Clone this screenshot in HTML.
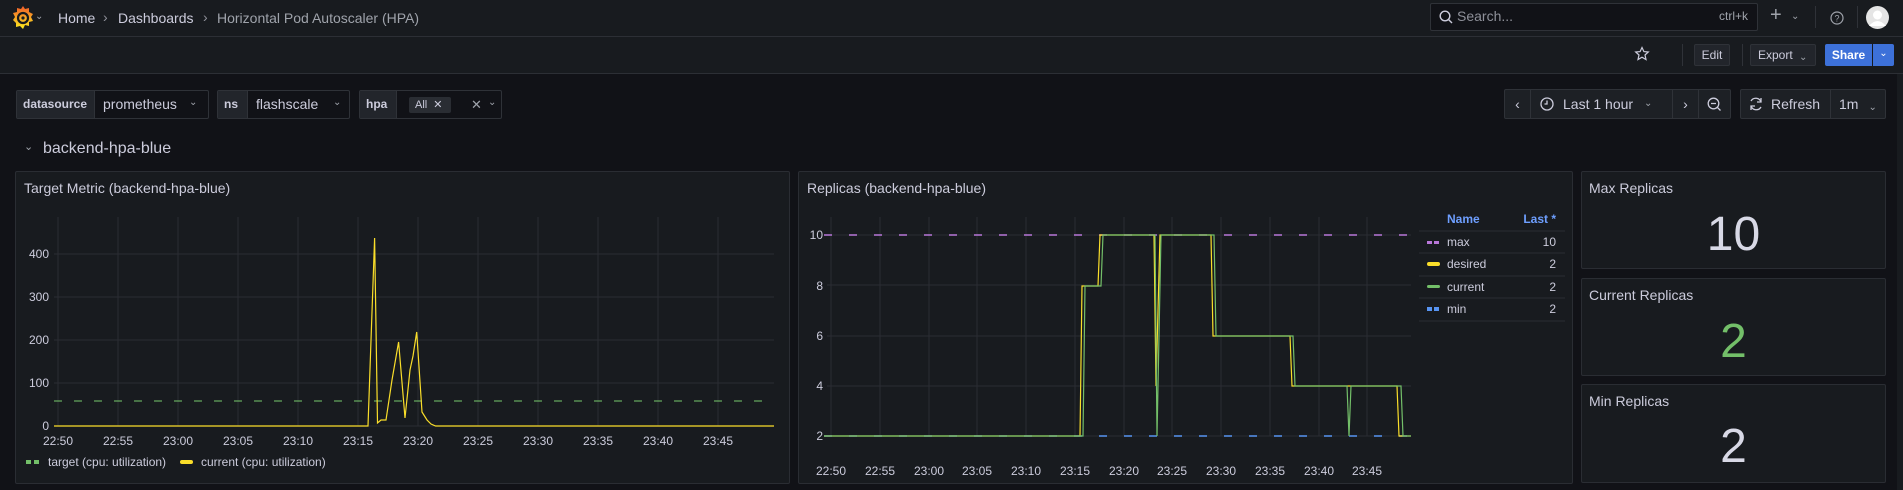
<!DOCTYPE html>
<html><head><meta charset="utf-8">
<style>
*{box-sizing:border-box;margin:0;padding:0}
body{width:1903px;height:490px;background:#111217;font-family:"Liberation Sans",sans-serif;color:#ccccdc;position:relative;overflow:hidden}
.a{position:absolute}
.bar1{left:0;top:0;width:1903px;height:37px;background:#181b1f;border-bottom:1px solid #2c2f35}
.bar2{left:0;top:37px;width:1903px;height:37px;background:#181b1f;border-bottom:1px solid #2c2f35}
.box{position:absolute;border:1px solid #2f3238;border-radius:2px;background:#111217;height:29px;top:90px}
.lbl{position:absolute;top:0;height:27px;background:#22252b;border-right:1px solid #2f3238;font-size:12px;font-weight:bold;line-height:27px;padding-left:6px;color:#ccccdc}
.val{position:absolute;top:0;line-height:27px;font-size:14px;color:#ccccdc}
.btn{position:absolute;top:89px;height:30px;background:#1d2025;border:1px solid #2f3238;font-size:14px;line-height:28px;color:#ccccdc}
.panel{position:absolute;background:#181b1f;border:1px solid #2a2d33;border-radius:2px}
.pt{position:absolute;font-size:14px;color:#ccccdc;font-weight:500}
.chev{font-size:10px;color:#9fa3ab}
span.chev{position:relative;top:1px}
</style></head><body>
<div class="a bar1"></div>
<div class="a bar2"></div>
<svg class="a" style="left:12px;top:5px" width="22" height="26" viewBox="0 0 22 26">
<defs><linearGradient id="g" x1="0" y1="1" x2="0" y2="0"><stop offset="0" stop-color="#fcee1f"/><stop offset="1" stop-color="#f15b2a"/></linearGradient></defs>
<path d="M11 1 L13 4 L17 3 L17 7 L21 9 L19 12 L21 16 L17 17 L17 21 L13 20 L11 24 L8 21 L4 22 L4 18 L1 15 L3 12 L1 8 L5 7 L5 3 L9 4 Z" fill="url(#g)"/>
<circle cx="11" cy="13" r="5" fill="none" stroke="#181b1f" stroke-width="2.2"/>
<circle cx="11" cy="13" r="1.6" fill="#181b1f"/>
</svg>
<div class="a chev" style="left:35px;top:11px">⌄</div>
<div class="a" style="left:58px;top:10px;font-size:14px;color:#ccccdc">Home</div>
<div class="a" style="left:103px;top:9px;font-size:14px;color:#8e9099">›</div>
<div class="a" style="left:118px;top:10px;font-size:14px;color:#ccccdc">Dashboards</div>
<div class="a" style="left:203px;top:9px;font-size:14px;color:#8e9099">›</div>
<div class="a" style="left:217px;top:10px;font-size:14px;color:#9fa3ab">Horizontal Pod Autoscaler (HPA)</div>
<div class="a" style="left:1430px;top:3px;width:328px;height:28px;background:#111217;border:1px solid #2f3238;border-radius:2px"></div>
<svg class="a" style="left:1439px;top:10px" width="14" height="14" viewBox="0 0 14 14"><circle cx="6" cy="6" r="4.8" fill="none" stroke="#ccccdc" stroke-width="1.4"/><path d="M9.5 9.5 L13 13" stroke="#ccccdc" stroke-width="1.4"/></svg>
<div class="a" style="left:1457px;top:8px;font-size:14px;color:#8e9099">Search...</div>
<div class="a" style="left:1719px;top:9px;font-size:12px;color:#9fa3ab">ctrl+k</div>
<div class="a" style="left:1770px;top:4px;font-size:20px;color:#9fa3ab">+</div>
<div class="a chev" style="left:1791px;top:11px">⌄</div>
<div class="a" style="left:1815px;top:6px;width:1px;height:22px;background:#2f3238"></div>
<svg class="a" style="left:1830px;top:11px" width="14" height="14" viewBox="0 0 14 14"><circle cx="7" cy="7" r="6" fill="none" stroke="#9fa3ab" stroke-width="1.2"/><text x="7" y="10.5" font-size="9" text-anchor="middle" fill="#9fa3ab" font-family="Liberation Sans">?</text></svg>
<div class="a" style="left:1857px;top:6px;width:1px;height:22px;background:#2f3238"></div>
<svg class="a" style="left:1866px;top:6px" width="23" height="23" viewBox="0 0 23 23"><circle cx="11.5" cy="11.5" r="11.5" fill="#e5e5e5"/><circle cx="11.5" cy="9" r="4.5" fill="#fff"/><path d="M3 20 Q11.5 10 20 20" fill="#fff"/></svg>
<svg class="a" style="left:1634px;top:46px" width="16" height="16" viewBox="0 0 16 16"><path d="M8 1.5 L9.9 5.6 L14.3 6 L11 9 L12 13.5 L8 11.2 L4 13.5 L5 9 L1.7 6 L6.1 5.6 Z" fill="none" stroke="#ccccdc" stroke-width="1.2"/></svg>
<div class="a" style="left:1682px;top:44px;width:1px;height:22px;background:#2f3238"></div>
<div class="a" style="left:1694px;top:44px;width:36px;height:22px;background:#22252b;border:1px solid #2f3238;border-radius:2px;font-size:12px;line-height:20px;text-align:center">Edit</div>
<div class="a" style="left:1742px;top:44px;width:1px;height:22px;background:#2f3238"></div>
<div class="a" style="left:1750px;top:44px;width:66px;height:22px;background:#22252b;border:1px solid #2f3238;border-radius:2px;font-size:12px;line-height:20px;padding-left:7px">Export <span class="chev" style="margin-left:3px">⌄</span></div>
<div class="a" style="left:1825px;top:44px;width:47px;height:22px;background:#3d71d9;border-radius:2px 0 0 2px;font-size:12px;line-height:22px;text-align:center;color:#fff;font-weight:bold">Share</div>
<div class="a" style="left:1873px;top:44px;width:21px;height:22px;background:#3d71d9;border-radius:0 2px 2px 0;font-size:10px;line-height:20px;text-align:center;color:#fff">⌄</div>
<div class="box" style="left:16px;width:193px"><div class="lbl" style="left:0;width:78px">datasource</div><div class="val" style="left:86px">prometheus</div><div class="val chev" style="left:172px;top:-2px">⌄</div></div>
<div class="box" style="left:217px;width:133px"><div class="lbl" style="left:0;width:30px">ns</div><div class="val" style="left:38px">flashscale</div><div class="val chev" style="left:115px;top:-2px">⌄</div></div>
<div class="box" style="left:359px;width:143px"><div class="lbl" style="left:0;width:37px">hpa</div>
<div class="a" style="left:49px;top:6px;width:42px;height:16px;background:#2a2d33;border-radius:2px;font-size:11px;line-height:16px;padding-left:6px">All <span style="margin-left:3px">✕</span></div>
<div class="val" style="left:111px;color:#9fa3ab;font-size:13px">✕</div><div class="val chev" style="left:128px;top:-2px">⌄</div></div>
<div class="btn" style="left:1504px;width:27px;text-align:center;border-radius:2px 0 0 2px">‹</div>
<div class="btn" style="left:1530px;width:143px;padding-left:32px">Last 1 hour<span class="chev" style="position:absolute;left:113px;top:0px">⌄</span></div>
<svg class="a" style="left:1540px;top:97px" width="14" height="14" viewBox="0 0 14 14"><circle cx="7" cy="7" r="6" fill="none" stroke="#ccccdc" stroke-width="1.3"/><path d="M7 3.5 V7 H4.5" fill="none" stroke="#ccccdc" stroke-width="1.3"/></svg>
<div class="btn" style="left:1672px;width:27px;text-align:center">›</div>
<div class="btn" style="left:1698px;width:33px;border-radius:0 2px 2px 0"></div>
<svg class="a" style="left:1707px;top:97px" width="15" height="15" viewBox="0 0 15 15"><circle cx="6.5" cy="6.5" r="5.3" fill="none" stroke="#ccccdc" stroke-width="1.3"/><path d="M4 6.5 H9 M10.3 10.3 L13.5 13.5" stroke="#ccccdc" stroke-width="1.3"/></svg>
<div class="btn" style="left:1740px;width:91px;padding-left:30px;border-radius:2px 0 0 2px">Refresh</div>
<svg class="a" style="left:1748px;top:96px" width="16" height="16" viewBox="0 0 16 16"><path d="M13 6 A5.5 5.5 0 0 0 3 5 M3 10 A5.5 5.5 0 0 0 13 11" fill="none" stroke="#ccccdc" stroke-width="1.3"/><path d="M13 2 V6 H9 M3 14 V10 H7" fill="none" stroke="#ccccdc" stroke-width="1.3"/></svg>
<div class="btn" style="left:1830px;width:56px;padding-left:8px;border-radius:0 2px 2px 0">1m<span class="chev" style="margin-left:10px">⌄</span></div>
<div class="a chev" style="left:24px;top:140px;font-size:11px">⌄</div>
<div class="a" style="left:43px;top:140px;font-size:16px;color:#ccccdc;font-weight:500">backend-hpa-blue</div>
<div class="panel" style="left:15px;top:171px;width:775px;height:313px"></div>
<div class="pt" style="left:24px;top:180px">Target Metric (backend-hpa-blue)</div>
<div class="panel" style="left:798px;top:171px;width:775px;height:313px"></div>
<div class="pt" style="left:807px;top:180px">Replicas (backend-hpa-blue)</div>
<div class="panel" style="left:1581px;top:171px;width:305px;height:98px"></div>
<div class="pt" style="left:1589px;top:180px">Max Replicas</div>
<div class="a" style="left:1581px;top:207px;width:305px;text-align:center;font-size:48px;color:#d8d9e6">10</div>
<div class="panel" style="left:1581px;top:278px;width:305px;height:98px"></div>
<div class="pt" style="left:1589px;top:287px">Current Replicas</div>
<div class="a" style="left:1581px;top:314px;width:305px;text-align:center;font-size:48px;color:#73bf69">2</div>
<div class="panel" style="left:1581px;top:384px;width:305px;height:99px"></div>
<div class="pt" style="left:1589px;top:393px">Min Replicas</div>
<div class="a" style="left:1581px;top:419px;width:305px;text-align:center;font-size:48px;color:#d8d9e6">2</div>
<div class="a" style="left:1897px;top:74px;width:6px;height:416px;background:#181b1f"></div>

<svg class="a" style="left:0;top:0" width="1903" height="490" font-family="Liberation Sans" font-size="12" fill="#ccccdc">
<g stroke="#2a2d33" stroke-width="1">
<path d="M54 254H774M54 297H774M54 340H774M54 383H774M54 426H774"/>
<path d="M58 217V426M118 217V426M178 217V426M238 217V426M298 217V426M358 217V426M418 217V426M478 217V426M538 217V426M598 217V426M658 217V426M718 217V426"/>
<path d="M827 235H1411M827 285H1411M827 336H1411M827 386H1411M827 436H1411"/>
<path d="M831 217V436M880 217V436M929 217V436M977 217V436M1026 217V436M1075 217V436M1124 217V436M1172 217V436M1221 217V436M1270 217V436M1319 217V436M1367 217V436"/>
</g>
<g text-anchor="end" fill="#ccccdc">
<text x="49" y="258">400</text><text x="49" y="301">300</text><text x="49" y="344">200</text><text x="49" y="387">100</text><text x="49" y="430">0</text>
<text x="823" y="239">10</text><text x="823" y="290">8</text><text x="823" y="340">6</text><text x="823" y="390">4</text><text x="823" y="440">2</text>
</g>
<g text-anchor="middle">
<text x="58" y="445">22:50</text><text x="118" y="445">22:55</text><text x="178" y="445">23:00</text><text x="238" y="445">23:05</text><text x="298" y="445">23:10</text><text x="358" y="445">23:15</text><text x="418" y="445">23:20</text><text x="478" y="445">23:25</text><text x="538" y="445">23:30</text><text x="598" y="445">23:35</text><text x="658" y="445">23:40</text><text x="718" y="445">23:45</text>
<text x="831" y="475">22:50</text><text x="880" y="475">22:55</text><text x="929" y="475">23:00</text><text x="977" y="475">23:05</text><text x="1026" y="475">23:10</text><text x="1075" y="475">23:15</text><text x="1124" y="475">23:20</text><text x="1172" y="475">23:25</text><text x="1221" y="475">23:30</text><text x="1270" y="475">23:35</text><text x="1319" y="475">23:40</text><text x="1367" y="475">23:45</text>
</g>
<path d="M54 401H774" stroke="#73bf69" stroke-width="1.5" stroke-dasharray="8,12" opacity="0.7"/>
<path d="M54 426L368 426L374.6 238L377.5 423L381 420L386 420L392 380L398.6 342L405 418L410 370L413 356L416.7 332L422 412L427 420L431 424L435.6 426L774 426" fill="none" stroke="#fade2a" stroke-width="1.2"/>
<rect x="26" y="460" width="5" height="4" fill="#73bf69"/><rect x="34" y="460" width="5" height="4" fill="#73bf69"/>
<text x="48" y="466">target (cpu: utilization)</text>
<rect x="180" y="460" width="13" height="4" rx="2" fill="#fade2a"/>
<text x="201" y="466">current (cpu: utilization)</text>
<path d="M824 235H1411" stroke="#b877d9" stroke-width="1.5" stroke-dasharray="8,17"/>
<path d="M824 436H1411" stroke="#5794f2" stroke-width="1.5" stroke-dasharray="8,17"/>
<path d="M824 436L1080 436L1082 286L1098 286L1100 235L1154 235L1156 386L1160 235L1211 235L1213 336L1290 336L1292 386L1397 386L1399 436L1411 436" fill="none" stroke="#fade2a" stroke-width="1.2"/>
<path d="M824 436L1083 436L1085 286L1101 286L1103 235L1155 235L1157 436L1161 235L1214 235L1216 336L1293 336L1295 386L1347 386L1349 436L1351 386L1401 386L1403 436L1411 436" fill="none" stroke="#73bf69" stroke-width="1.2"/>
<text x="1447" y="223" fill="#6e9fff" font-weight="bold">Name</text>
<text x="1556" y="223" fill="#6e9fff" font-weight="bold" text-anchor="end">Last *</text>
<g stroke="#2a2d33"><path d="M1419 231H1565M1419 253H1565M1419 276H1565M1419 298H1565M1419 321H1565"/></g>
<rect x="1427" y="241" width="5" height="3" fill="#b877d9"/><rect x="1434" y="241" width="5" height="3" fill="#b877d9"/>
<rect x="1427" y="262" width="13" height="4" rx="2" fill="#fade2a"/>
<rect x="1427" y="285" width="13" height="3" rx="1.5" fill="#73bf69"/>
<rect x="1427" y="307" width="5" height="4" fill="#5794f2"/><rect x="1434" y="307" width="5" height="4" fill="#5794f2"/>
<text x="1447" y="246">max</text><text x="1447" y="268">desired</text><text x="1447" y="291">current</text><text x="1447" y="313">min</text>
<g text-anchor="end"><text x="1556" y="246">10</text><text x="1556" y="268">2</text><text x="1556" y="291">2</text><text x="1556" y="313">2</text></g>
</svg>
</body></html>
